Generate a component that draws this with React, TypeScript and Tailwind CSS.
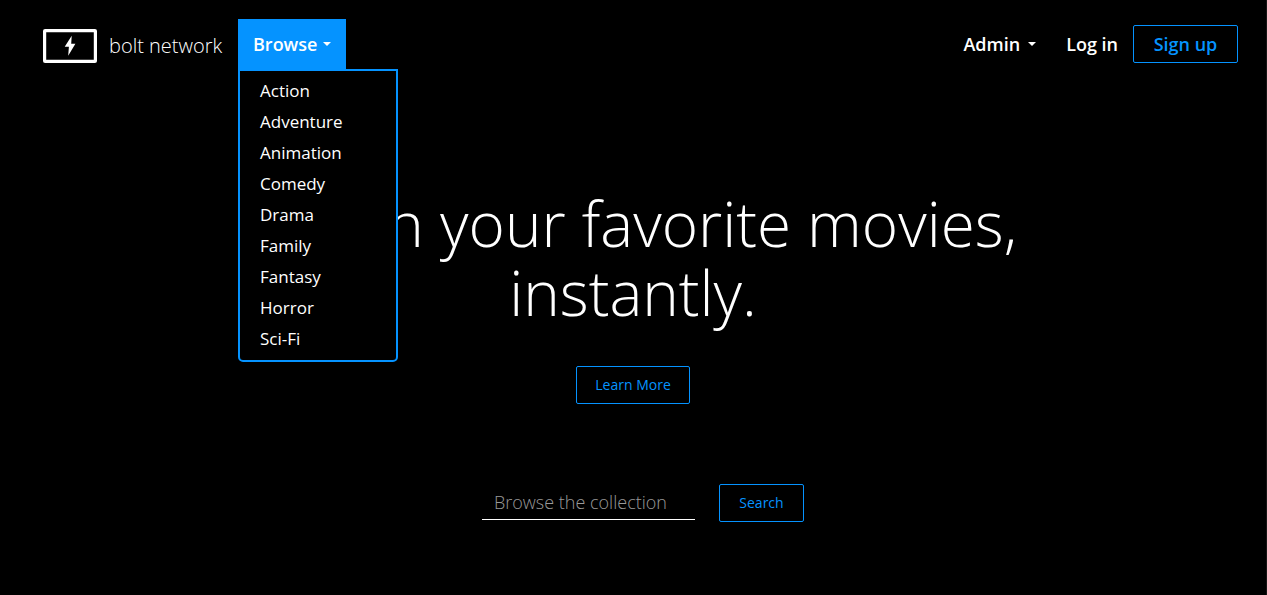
const genres = [
  'Action',
  'Adventure',
  'Animation',
  'Comedy',
  'Drama',
  'Family',
  'Fantasy',
  'Horror',
  'Sci-Fi',
];

function Caret() {
  return (
    <svg className="h-1 w-2 shrink-0" viewBox="0 0 8 4" fill="currentColor" aria-hidden="true">
      <path d="M0 0h8L4 4z" />
    </svg>
  );
}

function Logo() {
  return (
    <svg className="h-[34px] w-[54px] shrink-0" viewBox="0 0 54 34" aria-hidden="true">
      <rect x="1.6" y="1.6" width="50.8" height="30.8" rx="0.5" fill="none" stroke="#fff" strokeWidth="3.2" strokeLinejoin="round" />
      <path d="M28.7 6.8 21.7 17.8h4.2L25.2 26.8 32.4 14.8h-4.2z" fill="#fff" />
    </svg>
  );
}

const outline =
  'flex h-[38px] items-center justify-center rounded-xs border border-[#0593ff] text-[#0593ff]';

export default function App() {
  return (
    <div className="min-h-screen border-r border-[#161616] bg-black font-['Open_Sans','Noto_Sans',sans-serif] text-white">
      <header className="flex items-start justify-between px-7 pt-[19px]">
        <div className="flex items-start">
          <a href="#" className="flex h-[52px] w-[210px] items-center gap-3 pt-px pl-[15px] text-xl font-light whitespace-nowrap">
            <Logo />
            <span>bolt network</span>
          </a>
          <nav className="relative">
            <button
              type="button"
              aria-expanded="true"
              className="flex h-[50px] w-27 items-center justify-between bg-[#0593ff] px-[15px] text-lg font-semibold"
            >
              Browse
              <Caret />
            </button>
            <ul className="absolute top-full left-0 z-10 w-40 rounded-b-[5px] border-2 border-[#0593ff] bg-black py-[5px]">
              {genres.map((genre) => (
                <li key={genre}>
                  <a href="#" className="block px-5 pt-[2px] pb-1 text-[17px] leading-[25px]">
                    {genre}
                  </a>
                </li>
              ))}
            </ul>
          </nav>
        </div>
        <nav className="flex h-[50px] items-center text-lg font-semibold">
          <button type="button" className="flex items-center gap-2 px-[15px]">
            Admin
            <Caret />
          </button>
          <a href="#" className="px-[15px]">
            Log in
          </a>
          <a href="#" className={`${outline} w-[105px]`}>
            Sign up
          </a>
        </nav>
      </header>
      <main className="flex flex-col items-center pt-[118px]">
        <h1 className="max-w-[900px] text-center text-[62px] leading-[69px] font-light">
          Watch your favorite movies, instantly.
        </h1>
        <a href="#" className={`${outline} mt-[39px] w-[114px] text-sm`}>
          Learn More
        </a>
        <form className="mt-20 flex items-start gap-6 pl-5">
          <input
            type="search"
            aria-label="Browse the collection"
            placeholder="Browse the collection"
            className="h-9 w-[213px] border-b border-white bg-transparent px-3 text-lg font-light outline-none placeholder:text-[#999]"
          />
          <button type="button" className={`${outline} w-[85px] text-sm`}>
            Search
          </button>
        </form>
      </main>
    </div>
  );
}
